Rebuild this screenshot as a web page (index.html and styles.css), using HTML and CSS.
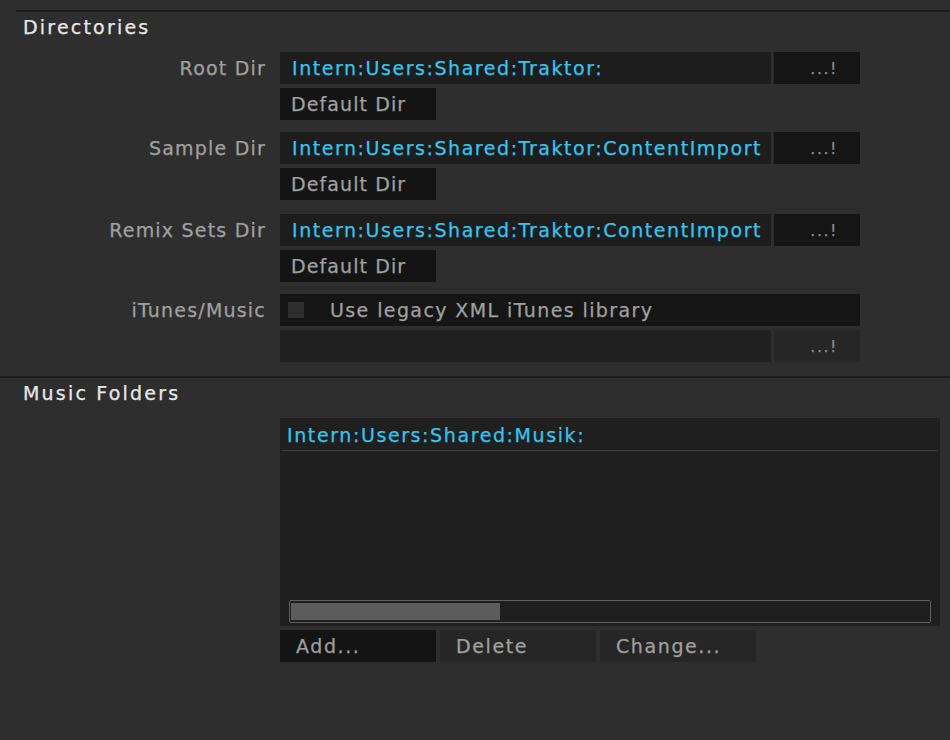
FILE: index.html
```html
<!DOCTYPE html>
<html lang="en">
<head>
    <meta charset="UTF-8">
    <title>Directories</title>
    <link rel="stylesheet" href="styles.css">
</head>
<body>
    <div class="prefs">
        <!-- Directories -->
        <div class="section">
            <h3 class="section-title">Directories</h3>
            <div class="rows">
                <div class="label">Root Dir</div>
                <div class="controls">
                    <div class="path-row">
                        <div class="path">Intern:Users:Shared:Traktor:</div>
                        <button class="browse-btn">...!</button>
                    </div>
                    <button class="btn btn-dark">Default Dir</button>
                </div>

                <div class="label">Sample Dir</div>
                <div class="controls">
                    <div class="path-row">
                        <div class="path">Intern:Users:Shared:Traktor:ContentImport</div>
                        <button class="browse-btn">...!</button>
                    </div>
                    <button class="btn btn-dark">Default Dir</button>
                </div>

                <div class="label spaced">Remix Sets Dir</div>
                <div class="controls spaced">
                    <div class="path-row">
                        <div class="path">Intern:Users:Shared:Traktor:ContentImport</div>
                        <button class="browse-btn">...!</button>
                    </div>
                    <button class="btn btn-dark">Default Dir</button>
                </div>

                <div class="label">iTunes/Music</div>
                <div class="controls">
                    <label class="check-row">
                        <span class="checkbox"></span>
                        Use legacy XML iTunes library
                    </label>
                    <div class="path-row disabled">
                        <div class="path"></div>
                        <button class="browse-btn">...!</button>
                    </div>
                </div>
            </div>
        </div>

        <!-- Music Folders -->
        <div class="section">
            <h3 class="section-title">Music Folders</h3>
            <div class="folders">
                <div class="folder-list">
                    <div class="folder-item">Intern:Users:Shared:Musik:</div>
                    <div class="folder-space"></div>
                    <div class="scrollbar">
                        <div class="scroll-thumb"></div>
                    </div>
                </div>
                <div class="folder-buttons">
                    <button class="btn btn-dark">Add...</button>
                    <button class="btn">Delete</button>
                    <button class="btn">Change...</button>
                </div>
            </div>
        </div>
    </div>
</body>
</html>
```

FILE: styles.css
```css
* {
    margin: 0;
    padding: 0;
    box-sizing: border-box;
}

body {
    font-family: "DejaVu Sans", "Liberation Sans", sans-serif;
    font-size: 19px;
    letter-spacing: 1.2px;
    background-color: #2e2e2e;
    color: #a0a0a0;
    -webkit-text-stroke: 0.25px currentColor;
}

.prefs {
    padding-top: 10px;
}

.section {
    border-top: 2px solid #1b1b1b;
    margin-left: 16px;
}

.section + .section {
    margin-top: 14px;
    margin-left: 0;
    padding-left: 16px;
}

.section-title {
    font-size: 19px;
    font-weight: normal;
    letter-spacing: 2.2px;
    color: #e8e8e8;
    padding-left: 7px;
    height: 30px;
    line-height: 30px;
}

.rows {
    display: grid;
    grid-template-columns: 250px 580px;
    column-gap: 14px;
    row-gap: 12px;
    padding-top: 10px;
}

.spaced {
    margin-top: 2px;
}

.label {
    height: 32px;
    line-height: 32px;
    text-align: right;
    white-space: nowrap;
}

.controls {
    display: flex;
    flex-direction: column;
    gap: 4px;
}

.path-row {
    display: flex;
    gap: 3px;
    height: 32px;
}

.path {
    flex: 1;
    background-color: #1d1d1d;
    color: #33c6ef;
    letter-spacing: 1.55px;
    padding-left: 12px;
    line-height: 32px;
    white-space: nowrap;
    overflow: hidden;
}

.browse-btn {
    width: 86px;
    background-color: #151515;
    color: #8a8a8a;
    border: none;
    font-family: inherit;
    font-size: 16px;
    letter-spacing: 1.5px;
    text-align: right;
    padding-right: 22px;
}

.disabled .path {
    background-color: #202020;
}

.disabled .browse-btn {
    background-color: #262626;
}

.btn {
    width: 156px;
    height: 32px;
    background-color: #262626;
    color: #a0a0a0;
    border: none;
    font-family: inherit;
    font-size: 19px;
    letter-spacing: 1.6px;
    text-align: left;
    padding-left: 16px;
}

.btn-dark {
    background-color: #141414;
}

.controls .btn {
    padding-left: 11px;
    letter-spacing: 1.1px;
}

.check-row {
    display: flex;
    align-items: center;
    height: 32px;
    background-color: #151515;
    padding-left: 8px;
    letter-spacing: 1.4px;
}

.checkbox {
    width: 16px;
    height: 16px;
    background-color: #2e2e2e;
    margin-right: 26px;
}

.folders {
    padding-left: 264px;
    padding-top: 10px;
}

.folder-list {
    width: 660px;
    height: 208px;
    background-color: #1f1f1f;
    display: flex;
    flex-direction: column;
}

.folder-item {
    height: 33px;
    line-height: 34px;
    color: #33c6ef;
    letter-spacing: 1.6px;
    padding-left: 5px;
    margin: 0 2px;
    border-bottom: 1px solid #3b4040;
}

.folder-space {
    flex: 1;
}

.scrollbar {
    height: 23px;
    margin: 0 9px 3px 9px;
    border: 1px solid #5f5f5f;
    border-radius: 2px;
    padding: 2px 1px;
}

.scroll-thumb {
    width: 209px;
    height: 100%;
    background-color: #5c5c5c;
}

.folder-buttons {
    display: flex;
    gap: 4px;
    margin-top: 4px;
}
```
